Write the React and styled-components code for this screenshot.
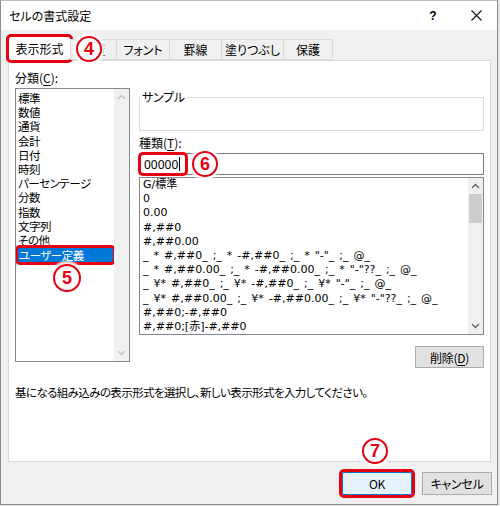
import React from 'react';
import styled, { createGlobalStyle } from 'styled-components';

const RED = '#e60012';

const GlobalStyle = createGlobalStyle`
  html, body {
    margin: 0;
    padding: 0;
    background: #e4e4e4;
  }
  body {
    font-family: "Noto Sans CJK JP", "Noto Sans", sans-serif;
    font-size: 12px;
    color: #000;
  }
`;

const Window = styled.div`
  position: relative;
  width: 498px;
  height: 505px;
  box-sizing: border-box;
  border: 1px solid #8c8c8c;
  border-top-color: #bdbdbd;
  background: #f0f0f0;
  display: flex;
  flex-direction: column;
  font-feature-settings: "palt";
`;

const TitleBar = styled.div`
  height: 29px;
  flex-shrink: 0;
  background: #fff;
  display: flex;
  align-items: center;
  padding-left: 8px;
`;

const Title = styled.div`
  flex: 1;
  font-size: 12px;
  line-height: 16px;
`;

const TitleButton = styled.div`
  width: ${p => p.$w}px;
  height: 29px;
  display: flex;
  align-items: center;
  justify-content: center;
  font-family: "Liberation Sans", sans-serif;
  font-weight: bold;
  font-size: 12px;
`;

const TabRow = styled.div`
  position: relative;
  z-index: 1;
  display: flex;
  align-items: flex-end;
  height: 25px;
  margin: 6px 0 -1px 8px;
`;

const Tab = styled.div`
  box-sizing: border-box;
  width: ${p => p.$w}px;
  height: ${p => (p.$active ? 25 : 21)}px;
  margin-bottom: ${p => (p.$active ? 0 : 1)}px;
  display: flex;
  align-items: center;
  justify-content: center;
  border: 1px solid #d9d9d9;
  border-bottom: ${p => (p.$active ? 'none' : '1px solid #d9d9d9')};
  margin-left: -1px;
  background: ${p => (p.$active ? '#fff' : '#f0f0f0')};
  padding-bottom: ${p => (p.$active ? 2 : 0)}px;
  font-size: 12px;
  ${p => p.$marked && `
    outline: 3px solid ${RED};
    outline-offset: -1px;
    border-radius: 3px;
  `}
`;

const Panel = styled.div`
  box-sizing: border-box;
  height: 402px;
  margin: 0 6px 0 7px;
  border: 1px solid #d9d9d9;
  background: #fff;
  padding: 9px 6px 0 6px;
`;

const Columns = styled.div`
  display: grid;
  grid-template-columns: 115px 345px;
  column-gap: 9px;
  align-items: start;
`;

const Column = styled.div`
  display: flex;
  flex-direction: column;
`;

const Label = styled.div`
  line-height: 16px;
  height: 16px;
  margin-top: ${p => p.$mt || 0}px;
  u { text-decoration: underline; text-underline-offset: 2px; }
`;

const ListBox = styled.div`
  box-sizing: border-box;
  height: ${p => p.$h}px;
  margin-top: 2px;
  border: 1px solid #828790;
  display: flex;
  background: #fff;
`;

const Items = styled.div`
  flex: 1;
  padding: ${p => p.$pt}px 0 0 ${p => p.$pl}px;
  overflow: hidden;
  white-space: nowrap;
`;

const Item = styled.div`
  line-height: 14.2px;
  height: 14.2px;
  font-size: 11.5px;
  letter-spacing: -0.5px;
  ${p => p.$mono && `
    font-family: "DejaVu Sans", "Noto Sans CJK JP", sans-serif;
    font-size: 11px;
    letter-spacing: 0;
    word-spacing: 1.5px;
  `}
  ${p => p.$selected && `
    height: 16px;
    line-height: 16px;
    margin: 0 0 -1.8px -1px;
    padding-left: 2px;
    background: #0078d7;
    color: #fff;
    outline: 3px solid ${RED};
    outline-offset: -1px;
    border-radius: 3px;
  `}
`;

const ScrollBar = styled.div`
  width: 15px;
  flex-shrink: 0;
  background: #f0f0f0;
  display: flex;
  flex-direction: column;
`;

const ArrowBox = styled.div`
  height: 16px;
  display: flex;
  align-items: center;
  justify-content: center;
`;

const Thumb = styled.div`
  height: 29px;
  margin: 0 1px;
  background: #cdcdcd;
`;

const Spacer = styled.div`
  flex: 1;
`;

const SampleGroup = styled.fieldset`
  box-sizing: border-box;
  margin: 19px 0 0;
  padding: 0;
  height: 42px;
  min-width: 0;
  border: 1px solid #dcdcdc;
`;

const SampleLegend = styled.legend`
  padding: 0 1px;
  margin-left: 1px;
  line-height: 16px;
  letter-spacing: -0.3px;
`;

const InputBox = styled.div`
  box-sizing: border-box;
  height: 22px;
  margin-top: 2px;
  border: 1px solid #7a7a7a;
  display: flex;
  align-items: stretch;
`;

const Typed = styled.span`
  display: inline-flex;
  align-items: center;
  padding: 0 6px 0 4px;
  outline: 3px solid ${RED};
  outline-offset: -1px;
  border-radius: 3px;
  font-family: "Noto Sans", sans-serif;
  font-size: 12px;
`;

const Caret = styled.span`
  width: 1px;
  height: 14px;
  margin-left: 1px;
  background: #000;
`;

const Button = styled.div`
  box-sizing: border-box;
  width: ${p => p.$w}px;
  height: ${p => p.$h}px;
  display: flex;
  align-items: center;
  justify-content: center;
  background: ${p => (p.$default ? '#e5f1fb' : '#e1e1e1')};
  border: 1px solid ${p => (p.$default ? '#0078d7' : '#adadad')};
  font-size: 12px;
  letter-spacing: -0.3px;
  ${p => p.$marked && `
    outline: 3px solid ${RED};
    outline-offset: 0px;
    border-radius: 2px;
  `}
  u { text-decoration: underline; text-underline-offset: 2px; }
`;

const DeleteRow = styled.div`
  display: flex;
  justify-content: flex-end;
  margin-top: 11px;
`;

const Hint = styled.div`
  margin-top: 16px;
  line-height: 16px;
  font-size: 11.5px;
  letter-spacing: -0.6px;
`;

const Footer = styled.div`
  flex: 1;
  display: flex;
  justify-content: flex-end;
  align-items: flex-start;
  gap: 10px;
  padding: 10px 5px 0 0;
`;

const Badge = styled.div`
  position: absolute;
  left: ${p => p.$x}px;
  top: ${p => p.$y}px;
  width: ${p => p.$d}px;
  height: ${p => p.$d}px;
  box-sizing: border-box;
  border-radius: 50%;
  border: 2px solid ${RED};
  background: #fff;
  box-shadow: 0 0 2px 3px rgba(255, 255, 255, 0.9);
  color: ${RED};
  font-family: "Liberation Sans", sans-serif;
  font-weight: bold;
  font-size: 18px;
  display: flex;
  align-items: center;
  justify-content: center;
  z-index: 5;
`;

const Chevron = ({ up, color }) => (
  <svg width="9" height="6" viewBox="0 0 9 6">
    <path
      d={up ? 'M1 5 L4.5 1.5 L8 5' : 'M1 1 L4.5 4.5 L8 1'}
      fill="none"
      stroke={color}
      strokeWidth="1.3"
    />
  </svg>
);

const CloseIcon = () => (
  <svg width="11" height="11" viewBox="0 0 11 11">
    <path d="M0.5 0.5 L10.5 10.5 M10.5 0.5 L0.5 10.5" stroke="#111" strokeWidth="1.1" />
  </svg>
);

const categories = [
  '標準', '数値', '通貨', '会計', '日付', '時刻', 'パーセンテージ',
  '分数', '指数', '文字列', 'その他', 'ユーザー定義',
];

const formats = [
  'G/標準',
  '0',
  '0.00',
  '#,##0',
  '#,##0.00',
  '_ * #,##0_ ;_ * -#,##0_ ;_ * "-"_ ;_ @_',
  '_ * #,##0.00_ ;_ * -#,##0.00_ ;_ * "-"??_ ;_ @_',
  '_ ¥* #,##0_ ;_ ¥* -#,##0_ ;_ ¥* "-"_ ;_ @_',
  '_ ¥* #,##0.00_ ;_ ¥* -#,##0.00_ ;_ ¥* "-"??_ ;_ @_',
  '#,##0;-#,##0',
  '#,##0;[赤]-#,##0',
];

const tabs = [
  { label: '表示形式', w: 63, active: true },
  { label: '配置', w: 47 },
  { label: 'フォント', w: 54 },
  { label: '罫線', w: 53 },
  { label: '塗りつぶし', w: 63 },
  { label: '保護', w: 50 },
];

export default function App() {
  return (
    <>
      <GlobalStyle />
      <Window>
        <TitleBar>
          <Title>セルの書式設定</Title>
          <TitleButton $w={44}>?</TitleButton>
          <TitleButton $w={42}><CloseIcon /></TitleButton>
        </TitleBar>

        <TabRow>
          {tabs.map(t => (
            <Tab key={t.label} $w={t.w} $active={t.active} $marked={t.active}>
              {t.label}
            </Tab>
          ))}
        </TabRow>

        <Panel>
          <Columns>
            <Column>
              <Label>分類(<u>C</u>):</Label>
              <ListBox $h={274}>
                <Items $pt={2} $pl={2}>
                  {categories.map((c, i) => (
                    <Item key={c} $selected={i === categories.length - 1}>{c}</Item>
                  ))}
                </Items>
                <ScrollBar>
                  <ArrowBox><Chevron up color="#c2c2c2" /></ArrowBox>
                  <Spacer />
                  <ArrowBox><Chevron color="#c2c2c2" /></ArrowBox>
                </ScrollBar>
              </ListBox>
            </Column>

            <Column>
              <SampleGroup>
                <SampleLegend>サンプル</SampleLegend>
              </SampleGroup>
              <Label $mt={4}>種類(<u>T</u>):</Label>
              <InputBox>
                <Typed>00000<Caret /></Typed>
              </InputBox>
              <ListBox $h={158}>
                <Items $pt={0} $pl={3}>
                  {formats.map(f => (
                    <Item key={f} $mono>{f}</Item>
                  ))}
                </Items>
                <ScrollBar>
                  <ArrowBox><Chevron up color="#606060" /></ArrowBox>
                  <Thumb />
                  <Spacer />
                  <ArrowBox><Chevron color="#606060" /></ArrowBox>
                </ScrollBar>
              </ListBox>
              <DeleteRow>
                <Button $w={69} $h={22}>削除(<u>D</u>)</Button>
              </DeleteRow>
            </Column>
          </Columns>
          <Hint>基になる組み込みの表示形式を選択し、新しい表示形式を入力してください。</Hint>
        </Panel>

        <Footer>
          <Button $w={70} $h={23} $default $marked>OK</Button>
          <Button $w={70} $h={23}>キャンセル</Button>
        </Footer>

        <Badge $x={75} $y={35} $d={26}>4</Badge>
        <Badge $x={52} $y={263} $d={28}>5</Badge>
        <Badge $x={191} $y={150} $d={26}>6</Badge>
        <Badge $x={361} $y={437} $d={26}>7</Badge>
      </Window>
    </>
  );
}
